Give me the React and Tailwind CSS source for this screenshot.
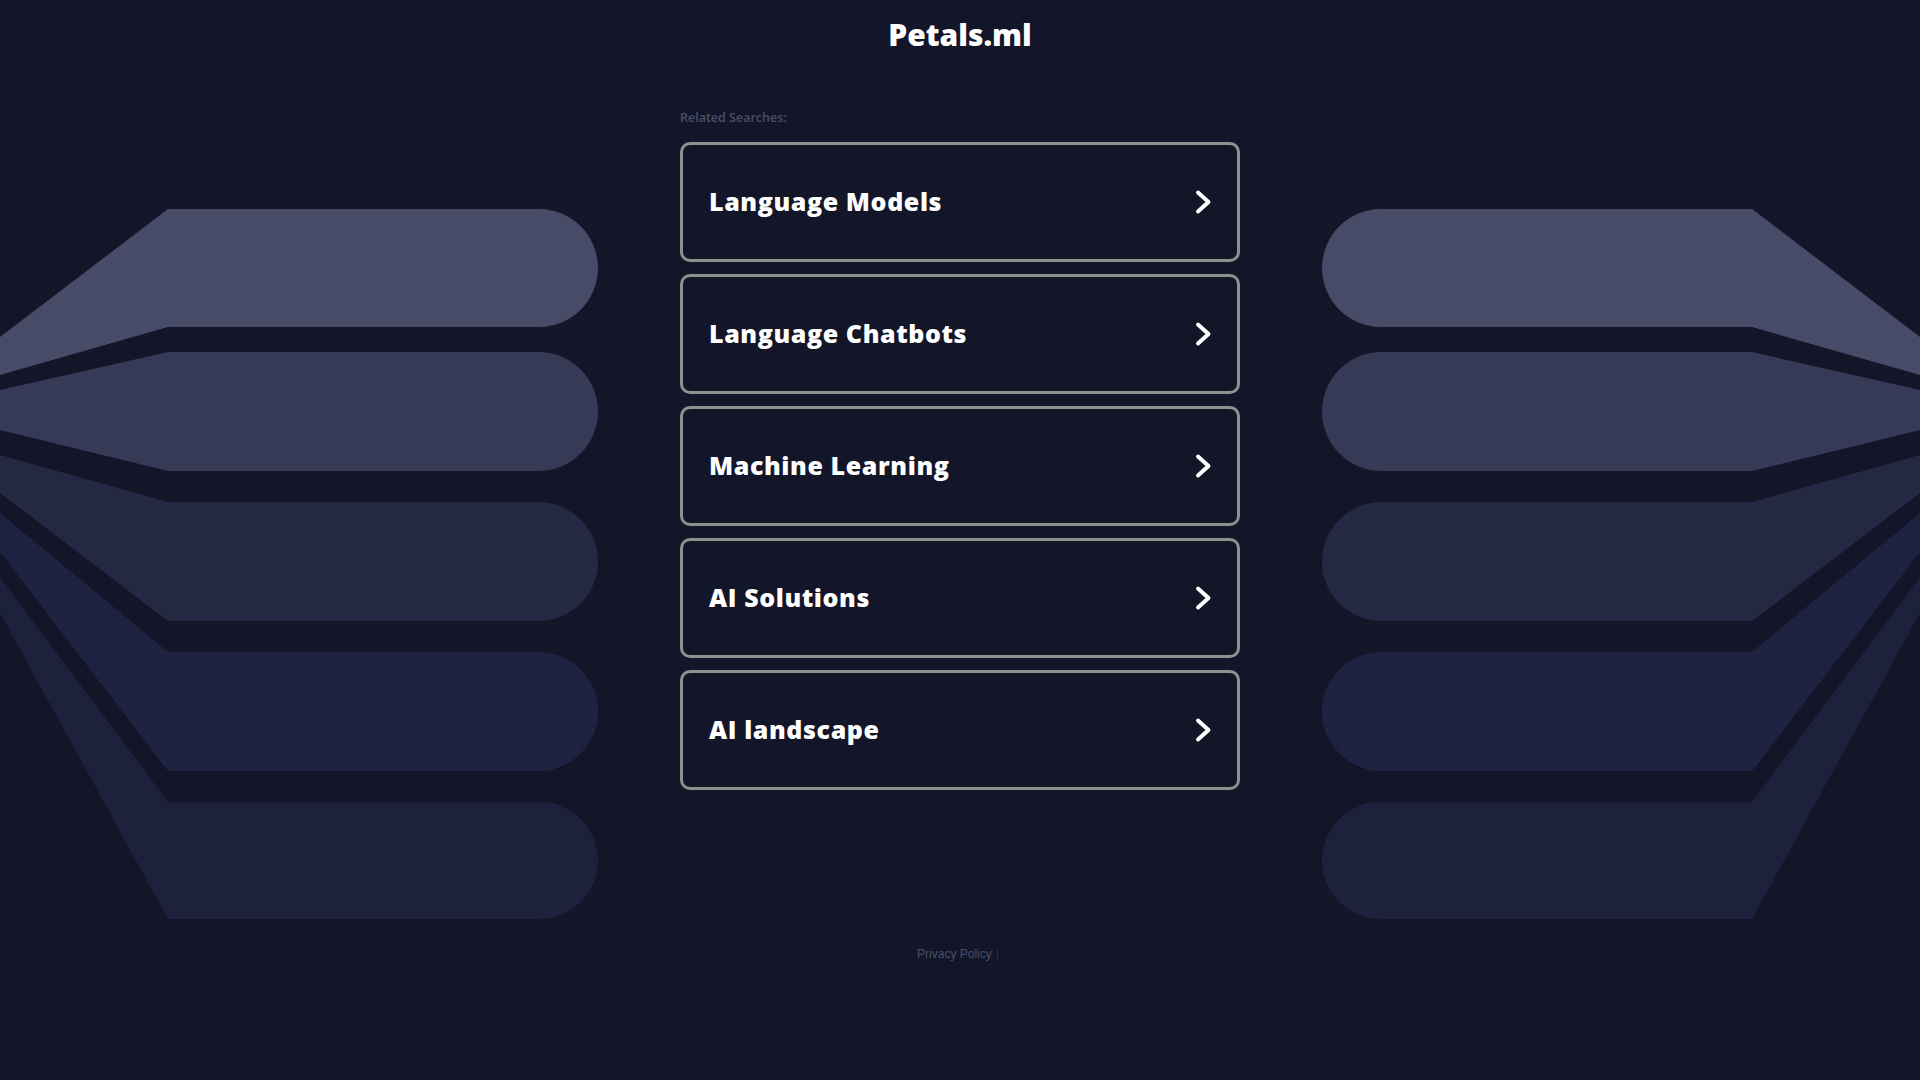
import React from 'react';

const stripes = [
  { top: 209, bottom: 327, lTop: 337, lBot: 375, fill: '#474b68' },
  { top: 352, bottom: 471, lTop: 390, lBot: 430, fill: '#363a57' },
  { top: 502, bottom: 621, lTop: 455, lBot: 493, fill: '#242843' },
  { top: 652, bottom: 771, lTop: 513, lBot: 552, fill: '#1e2240', dots: true },
  { top: 802, bottom: 919, lTop: 577, lBot: 613, fill: '#1c203b', dots: true },
];

const searches = [
  'Language Models',
  'Language Chatbots',
  'Machine Learning',
  'AI Solutions',
  'AI landscape',
];

function stripePath(s) {
  const r = (s.bottom - s.top) / 2;
  const end = 598 - r;
  return `M0 ${s.lTop} L168 ${s.top} H${end} A${r} ${r} 0 0 1 ${end} ${s.bottom} H168 L0 ${s.lBot} Z`;
}

function Fan({ flip, id }) {
  return (
    <svg width="598" height="1080" viewBox="0 0 598 1080" className="shrink-0 block">
      <defs>
        <pattern id={id} width="4" height="4" patternUnits="userSpaceOnUse">
          <circle cx="1" cy="1" r="0.6" fill="#2c3156" />
        </pattern>
      </defs>
      <g transform={flip ? 'translate(598 0) scale(-1 1)' : undefined}>
        {stripes.map((s, i) => (
          <g key={i}>
            <path d={stripePath(s)} fill={s.fill} />
            {s.dots && <path d={stripePath(s)} fill={`url(#${id})`} opacity="0.6" />}
          </g>
        ))}
      </g>
    </svg>
  );
}

function Chevron() {
  return (
    <svg width="20" height="26" viewBox="0 0 20 26" fill="none">
      <path d="M5 3.5 L15.5 13 L5 22.5" stroke="#ffffff" strokeWidth="4" strokeLinecap="round" strokeLinejoin="round" />
    </svg>
  );
}

export default function App() {
  return (
    <div className="min-h-screen w-full bg-[#131628] flex justify-between overflow-hidden">
      <Fan id="dots-left" />

      <main className="w-[560px] shrink-0 flex flex-col">
        <h1
          className="h-[68px] flex items-center justify-center text-[30px] font-extrabold text-white"
          style={{ fontFamily: '"Open Sans", sans-serif' }}
        >
          Petals.ml
        </h1>

        <p
          className="mt-[42px] h-4 leading-4 text-[12.5px] font-semibold text-[#4a4e68]"
          style={{ fontFamily: '"Open Sans", sans-serif' }}
        >
          Related Searches:
        </p>

        <div className="mt-4 flex flex-col gap-3">
          {searches.map((label) => (
            <a
              key={label}
              href="#"
              className="h-[120px] flex items-center justify-between border-[3px] border-[#8f8f8f] rounded-[10px] pl-[26px] pr-[24px] text-white text-[25px] font-extrabold tracking-[0.6px]"
              style={{ fontFamily: '"Open Sans", sans-serif' }}
            >
              <span>{label}</span>
              <Chevron />
            </a>
          ))}
        </div>

        <div
          className="mt-[157px] h-[14px] leading-[14px] flex justify-center items-center gap-1 pr-[4px] text-[12px] text-[#4a4e68]"
          style={{ fontFamily: '"Liberation Sans", Arial, sans-serif' }}
        >
          <a href="#">Privacy Policy</a>
          <span className="text-[#2c3046]">|</span>
        </div>
      </main>

      <Fan id="dots-right" flip />
    </div>
  );
}
